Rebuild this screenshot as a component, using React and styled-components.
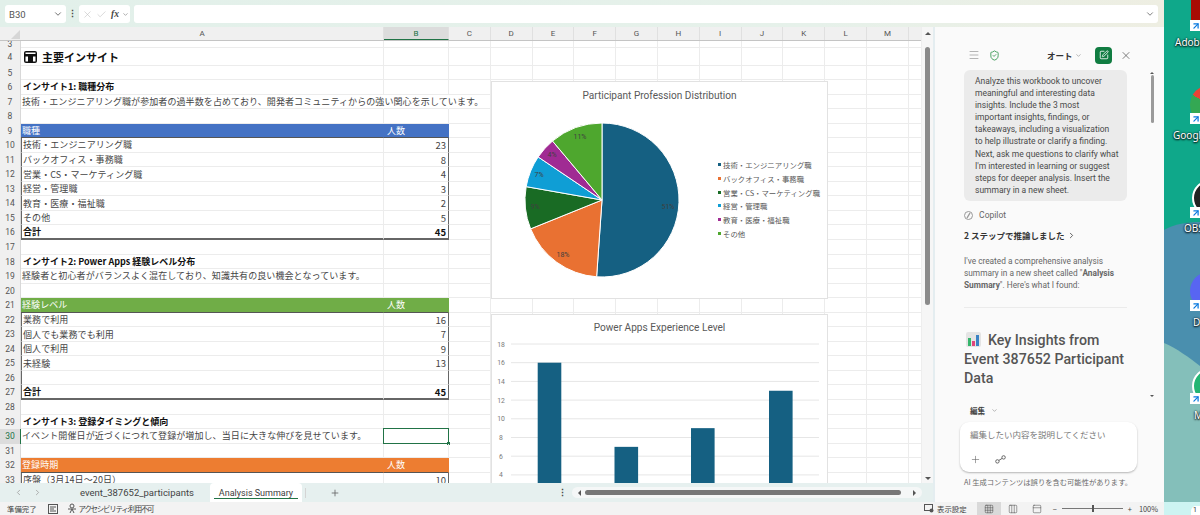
import React from 'react'
import styled, { createGlobalStyle } from 'styled-components'
import { ArrowUpRight, Check, ChevronDown, ChevronLeft, ChevronRight, Columns3, Grid3x3, Menu, PanelTop, Plus, ShieldCheck, SquarePen, X } from 'lucide-react'

const JP = `'Noto Sans CJK JP', 'Noto Sans', sans-serif`
const UI = `Roboto, 'Noto Sans CJK JP', sans-serif`

const COLUMNS = ['C', 'D', 'E', 'F', 'G', 'H', 'I', 'J', 'K', 'L', 'M', 'N']

const ROWS = [
    { n: 3, h: 7 },
    { n: 4, h: 18, kind: 'title', a: '主要インサイト' },
    { n: 5, h: 14 },
    { n: 6, kind: 'bold', a: 'インサイト1: 職種分布' },
    { n: 7, spill: true, a: '技術・エンジニアリング職が参加者の過半数を占めており、開発者コミュニティからの強い関心を示しています。' },
    { n: 8 },
    { n: 9, fill: '#4472c4', a: '職種', b: '人数' },
    { n: 10, box: true, a: '技術・エンジニアリング職', b: '23' },
    { n: 11, box: true, a: 'バックオフィス・事務職', b: '8' },
    { n: 12, box: true, a: '営業・CS・マーケティング職', b: '4' },
    { n: 13, box: true, a: '経営・管理職', b: '3' },
    { n: 14, box: true, a: '教育・医療・福祉職', b: '2' },
    { n: 15, box: true, a: 'その他', b: '5' },
    { n: 16, box: true, total: true, a: '合計', b: '45' },
    { n: 17 },
    { n: 18, kind: 'bold', a: 'インサイト2: Power Apps 経験レベル分布' },
    { n: 19, a: '経験者と初心者がバランスよく混在しており、知識共有の良い機会となっています。' },
    { n: 20 },
    { n: 21, fill: '#70ad47', a: '経験レベル', b: '人数' },
    { n: 22, box: true, a: '業務で利用', b: '16' },
    { n: 23, box: true, a: '個人でも業務でも利用', b: '7' },
    { n: 24, box: true, a: '個人で利用', b: '9' },
    { n: 25, box: true, a: '未経験', b: '13' },
    { n: 26, box: true },
    { n: 27, box: true, total: true, a: '合計', b: '45' },
    { n: 28 },
    { n: 29, kind: 'bold', a: 'インサイト3: 登録タイミングと傾向' },
    { n: 30, active: true, a: 'イベント開催日が近づくにつれて登録が増加し、当日に大きな伸びを見せています。' },
    { n: 31 },
    { n: 32, fill: '#ed7d31', a: '登録時期', b: '人数' },
    { n: 33, box: true, a: '序盤（3月14日〜20日）', b: '10' }
]

const PROFESSIONS = [
    { label: '技術・エンジニアリング職', value: 23, color: '#156082', pct: '51%', x: 176, y: 100 },
    { label: 'バックオフィス・事務職', value: 8, color: '#e97132', pct: '18%', x: 71, y: 148 },
    { label: '営業・CS・マーケティング職', value: 4, color: '#196b24', pct: '9%', x: 43, y: 100 },
    { label: '経営・管理職', value: 3, color: '#0f9ed5', pct: '7%', x: 47, y: 68 },
    { label: '教育・医療・福祉職', value: 2, color: '#a02b93', pct: '4%', x: 60, y: 48 },
    { label: 'その他', value: 5, color: '#4ea72e', pct: '11%', x: 88, y: 30 }
]

const EXPERIENCE = [
    { x: 45.7, value: 16 },
    { x: 122.5, value: 7 },
    { x: 199, value: 9 },
    { x: 277, value: 13 }
]

const GlobalStyle = createGlobalStyle`
    html, body {
        margin: 0;
        padding: 0;
        overflow: hidden;
        background: #fff;
    }
    * {
        box-sizing: border-box;
    }
`

const Page = styled.div`
    display: flex;
    width: 1200px;
    height: 515px;
    overflow: hidden;
    font-family: ${JP};
`

const ExcelWindow = styled.div`
    display: flex;
    flex-direction: column;
    width: 1164px;
    height: 515px;
    flex: none;
`

const FormulaRow = styled.div`
    display: flex;
    align-items: center;
    height: 27px;
    padding: 5px 6px 4px 5px;
    background: linear-gradient(90deg, #e2f0ea 0%, #e6f1ea 70%, #eeeee2 100%);
    flex: none;
`

const NameBox = styled.div`
    display: flex;
    align-items: center;
    justify-content: space-between;
    width: 61px;
    height: 18px;
    padding: 0 3px 0 4px;
    background: #fff;
    border-radius: 3px;
    color: #555;
    font: 9.5px ${UI};
`

const Dots = styled.div`
    width: 13px;
    color: #444;
    font: bold 9px ${UI};
    text-align: center;
`

const FxBox = styled.div`
    display: flex;
    align-items: center;
    gap: 3px;
    width: 51px;
    height: 18px;
    padding: 0 0 0 3px;
    background: #fff;
    border-radius: 3px;
    color: #bdbdbd;
`

const FxLabel = styled.span`
    margin-left: 1px;
    color: #444;
    font: italic bold 9.5px 'Liberation Serif', serif;
`

const FormulaInput = styled.div`
    display: flex;
    align-items: center;
    justify-content: flex-end;
    flex: 1;
    height: 18px;
    margin-left: 4px;
    padding-right: 3px;
    background: #fff;
    border-radius: 3px;
    color: #666;
`

const Workspace = styled.div`
    display: flex;
    flex: 1;
    min-height: 0;
`

const LeftColumn = styled.div`
    display: flex;
    flex-direction: column;
    width: 933px;
    flex: none;
`

const SheetArea = styled.div`
    display: flex;
    flex: 1;
    min-height: 0;
`

const Sheet = styled.div`
    position: relative;
    width: 921px;
    overflow: hidden;
    background: #fff;
    flex: none;
`

const HeaderRow = styled.div`
    display: flex;
    height: 14px;
    background: #f0f0f0;
    border-bottom: 1px solid #c4c4c4;
`

const Corner = styled.div`
    position: relative;
    width: 21px;
    flex: none;
    &::after {
        content: '';
        position: absolute;
        right: 1px;
        bottom: 1px;
        border-style: solid;
        border-width: 0 0 9px 9px;
        border-color: transparent transparent #d6d6d6 transparent;
    }
`

const ColumnHead = styled.div`
    width: ${p => p.$w}px;
    flex: none;
    color: ${p => (p.$on ? '#217346' : '#555')};
    background: ${p => (p.$on ? '#dcdcdc' : 'transparent')};
    border-right: 1px solid #e0e0e0;
    border-bottom: ${p => (p.$on ? '1px solid #217346' : '0')};
    font: 8px/13px ${UI};
    text-align: center;
`

const Row = styled.div`
    display: flex;
    height: ${p => p.$h}px;
`

const RowHead = styled.div`
    width: 21px;
    flex: none;
    overflow: hidden;
    background: ${p => (p.$on ? '#dcdcdc' : '#f0f0f0')};
    border-right: ${p => (p.$on ? '1px solid #217346' : '1px solid #d8d8d8')};
    color: ${p => (p.$on ? '#217346' : '#555')};
    font: 8.5px/${p => p.$h}px ${UI};
    text-align: center;
`

const cellBottom = p => {
    if (p.$total) return '2px solid #666'
    return `1px solid ${p.$fill ? '#555' : '#ececec'}`
}

const CellA = styled.div`
    display: flex;
    align-items: center;
    gap: 5px;
    width: 363px;
    flex: none;
    white-space: nowrap;
    color: ${p => (p.$fill ? '#fff' : p.$kind || p.$total ? '#111' : '#444')};
    background: ${p => p.$fill || 'transparent'};
    border-right: 1px solid ${p => (p.$spill || p.$fill ? 'transparent' : '#ececec')};
    border-bottom: ${cellBottom};
    border-left: ${p => (p.$box ? '1px solid #666' : '0')};
    font-size: ${p => (p.$kind === 'title' ? 11 : 9)}px;
    font-weight: ${p => (p.$kind || p.$total ? 700 : 400)};
    letter-spacing: ${p => (p.$kind || p.$total ? '0' : '0.09px')};
    padding-left: ${p => (p.$kind === 'title' ? '3px' : p.$kind === 'bold' ? '2px' : '1px')};
`

const CellB = styled.div`
    position: relative;
    display: flex;
    align-items: center;
    justify-content: ${p => (p.$fill ? 'flex-start' : 'flex-end')};
    width: 65px;
    flex: none;
    padding: 0 2px 0 3px;
    color: ${p => (p.$fill ? '#fff' : p.$total ? '#111' : '#444')};
    background: ${p => p.$fill || 'transparent'};
    border-right: ${p => (p.$box ? '1px solid #666' : `1px solid ${p.$spill || p.$fill ? 'transparent' : '#ececec'}`)};
    border-bottom: ${cellBottom};
    font-size: ${p => (p.$fill ? 9 : 9.5)}px;
    font-weight: ${p => (p.$total ? 700 : 400)};
`

const Selection = styled.div`
    position: absolute;
    inset: -1px -1px -1px -1px;
    border: 1.5px solid #217346;
    &::after {
        content: '';
        position: absolute;
        right: -2px;
        bottom: -2px;
        width: 3px;
        height: 3px;
        background: #217346;
    }
`

const BlankCell = styled.div`
    width: ${p => p.$w}px;
    flex: none;
    border-right: 1px solid #ececec;
    border-bottom: 1px solid #ececec;
`

const ChartCard = styled.div`
    position: absolute;
    top: ${p => p.$top}px;
    left: 491px;
    width: 337px;
    height: ${p => p.$h}px;
    background: #fff;
    border: 1px solid #e2e2e2;
`

const ChartTitle = styled.div`
    height: ${p => p.$h}px;
    color: #595959;
    font: 10.1px/${p => p.$lh}px ${UI};
    text-align: center;
`

const PieBody = styled.div`
    display: flex;
    align-items: center;
`

const Legend = styled.div`
    display: flex;
    flex-direction: column;
    gap: 2px;
    margin-left: 10px;
    margin-bottom: 10px;
`

const LegendItem = styled.div`
    display: flex;
    align-items: center;
    gap: 2px;
    height: 11.7px;
    color: #595959;
    font-size: 7.4px;
    white-space: nowrap;
`

const LegendSwatch = styled.span`
    width: 3px;
    height: 3px;
    background: ${p => p.$color};
`

const ChartSvg = styled.svg`
    display: block;
    flex: none;
    font-family: ${UI};
`

const VScroll = styled.div`
    display: flex;
    flex-direction: column;
    align-items: center;
    width: 12px;
    padding: 2px 0 0;
    background: #f6f6f6;
    border-left: 1px solid #eee;
`

const VThumb = styled.div`
    width: 5px;
    height: 258px;
    margin-top: 12px;
    margin-bottom: auto;
    background: #8a8a8a;
    border-radius: 3px;
`

const Arrow = styled.div`
    width: 0;
    height: 0;
    flex: none;
    border-left: ${p => p.$s || 3}px solid ${p => (p.$dir === 'right' ? '#555' : 'transparent')};
    border-right: ${p => p.$s || 3}px solid ${p => (p.$dir === 'left' ? '#555' : 'transparent')};
    border-top: ${p => p.$s || 3}px solid ${p => (p.$dir === 'down' ? '#555' : 'transparent')};
    border-bottom: ${p => p.$s || 3}px solid ${p => (p.$dir === 'up' ? '#555' : 'transparent')};
`

const TabBar = styled.div`
    display: flex;
    align-items: center;
    height: 19px;
    padding-left: 14px;
    background: #e6f0ef;
    color: #444;
    font: 9.5px ${UI};
    flex: none;
`

const TabNav = styled.div`
    display: flex;
    gap: 10px;
    width: 66px;
    color: #9a9a9a;
`

const Tab = styled.div`
    width: 130px;
    flex: none;
    color: #444;
    white-space: nowrap;
`

const ActiveTab = styled.div`
    position: relative;
    display: flex;
    align-items: center;
    justify-content: center;
    width: 92px;
    height: 19px;
    flex: none;
    background: #fff;
    border-radius: 4px 4px 0 0;
    color: #3c3c3c;
    font-size: 9px;
    &::after {
        content: '';
        position: absolute;
        left: 4px;
        right: 4px;
        bottom: 3px;
        height: 1.5px;
        background: #217346;
    }
`

const AddTab = styled.div`
    display: flex;
    justify-content: center;
    width: 58px;
    flex: none;
    margin-left: 3px;
    color: #666;
    border-left: 1px solid #d4d4d4;
`

const SheetDots = styled.div`
    width: 20px;
    flex: none;
    margin-left: 189px;
    color: #444;
    font: bold 9px ${UI};
    text-align: center;
`

const HScroll = styled.div`
    display: flex;
    align-items: center;
    gap: 4px;
    width: 350px;
    height: 11px;
    flex: none;
    padding: 0 3px;
    background: #f5f7f7;
    border-radius: 6px;
`

const HThumb = styled.div`
    flex: 1;
    height: 5px;
    margin-right: 8px;
    background: #777;
    border-radius: 3px;
`

const Panel = styled.div`
    display: flex;
    flex-direction: column;
    width: 231px;
    flex: none;
    padding-bottom: 14px;
    background: #fafafa;
    border-left: 2px solid #e4edf0;
    color: #444;
    font-family: ${UI};
`

const PanelHead = styled.div`
    display: flex;
    align-items: center;
    height: 43px;
    padding: 20px 32px 7px 33px;
    flex: none;
`

const ModeLabel = styled.div`
    display: flex;
    align-items: center;
    gap: 2px;
    width: 37px;
    margin-left: 47px;
    color: #333;
    font: bold 8.5px ${JP};
    white-space: nowrap;
    flex: none;
`

const NewChat = styled.div`
    display: flex;
    align-items: center;
    justify-content: center;
    width: 17px;
    height: 17px;
    margin-left: 11px;
    margin-right: 8px;
    border-radius: 4px;
    background: #107c41;
    color: #fff;
    flex: none;
`

const ShieldWrap = styled.span`
    display: flex;
    margin-left: 9px;
    color: #3d9b57;
`

const MenuWrap = styled.span`
    display: flex;
    color: #b4b4b4;
`

const ScrollBody = styled.div`
    display: flex;
    height: 329px;
    flex: none;
`

const ScrollContent = styled.div`
    width: 212px;
    height: 100%;
    padding-left: 29px;
    overflow: hidden;
    flex: none;
`

const Bubble = styled.div`
    width: 163px;
    height: 131px;
    padding: 5px 5px 0 11px;
    background: #ebebeb;
    border-radius: 6px;
    color: #4a4a4a;
    font-size: 8.5px;
    line-height: 12.1px;
    white-space: pre;
`

const CopilotLine = styled.div`
    display: flex;
    align-items: center;
    gap: 4px;
    height: 12px;
    margin-top: 8px;
    color: #666;
    font-size: 8.5px;
`

const StepsLine = styled.div`
    display: flex;
    align-items: center;
    gap: 3px;
    margin-top: 8px;
    height: 12px;
    color: #333;
    font: bold 8.5px ${JP};
`

const Reply = styled.p`
    margin: 14px 0 0;
    color: #666;
    font-size: 8.3px;
    line-height: 12.2px;
    white-space: pre;
`

const Divider = styled.hr`
    width: 163px;
    height: 1px;
    margin: 15px 0 0;
    border: 0;
    background: #ebebeb;
`

const Heading = styled.h2`
    width: 168px;
    margin: 23px 0 0;
    color: #555;
    font: 500 14.2px/19.4px ${UI};
`

const ReportSvg = styled.svg`
    margin: 0 7px 0 2px;
    vertical-align: -2px;
`

const PanelScroll = styled.div`
    display: flex;
    flex-direction: column;
    align-items: center;
    width: 8px;
    margin-left: 1px;
`

const PanelThumb = styled.div`
    width: 3px;
    height: 48px;
    margin-top: 1px;
    margin-bottom: auto;
    border-radius: 2px;
    background: #9a9a9a;
`

const EditLabel = styled.div`
    display: flex;
    align-items: center;
    gap: 6px;
    height: 12px;
    margin: 5px 0 0 35px;
    color: #444;
    font: 700 7.5px ${JP};
`

const Composer = styled.div`
    display: flex;
    flex-direction: column;
    justify-content: space-between;
    width: 177px;
    height: 50px;
    margin: 6px 0 0 25px;
    padding: 6px 0 7px 10px;
    background: #fff;
    border-radius: 9px;
    box-shadow: 0 1px 2px rgba(0, 0, 0, 0.28);
`

const Placeholder = styled.div`
    color: #777;
    font: 8.5px ${JP};
`

const ComposerTools = styled.div`
    display: flex;
    align-items: center;
    gap: 14px;
    color: #666;
`

const Disclaimer = styled.div`
    margin: 5px 0 0 29px;
    color: #6a6a6a;
    font: 7.3px ${JP};
    white-space: nowrap;
`

const StatusBar = styled.div`
    display: flex;
    align-items: center;
    height: 13px;
    padding: 0 6px 0 7px;
    background: #f3f3f3;
    color: #444;
    font: 7.4px ${JP};
    white-space: nowrap;
    flex: none;
`

const StatusGroup = styled.div`
    display: flex;
    align-items: center;
    gap: 3px;
    margin-left: ${p => p.$ml || 0}px;
    flex: none;
`

const AccessGroup = styled(StatusGroup)`
    gap: 1px;
`

const AccessLabel = styled.span`
    font-size: 7.5px;
    letter-spacing: -1.3px;
`

const DisplayGroup = styled(StatusGroup)`
    margin-left: auto;
`

const ViewButtons = styled.div`
    display: flex;
    margin-left: 10px;
    flex: none;
`

const ViewButton = styled.div`
    display: flex;
    align-items: center;
    justify-content: center;
    width: 24px;
    height: 13px;
    background: ${p => (p.$on ? '#d9d9d9' : 'transparent')};
    color: #444;
`

const ZoomSlider = styled.div`
    position: relative;
    width: 61px;
    height: 1px;
    margin: 0 2px;
    background: #777;
    &::after {
        content: '';
        position: absolute;
        left: 30px;
        top: -3px;
        width: 2px;
        height: 7px;
        background: #555;
    }
`

const Desktop = styled.div`
    position: relative;
    flex: 1;
    height: 515px;
    overflow: hidden;
    background: #cdf4f2;
`

const Wallpaper = styled.svg`
    position: absolute;
    top: 0;
    left: 0;
`

const Taskbadge = styled.div`
    position: absolute;
    top: 506px;
    left: 27px;
    width: 20px;
    height: 12px;
    padding-left: 2px;
    background: #fff;
    border-radius: 5px 0 0 0;
    color: #333;
    font: 7px/9px ${UI};
`

const Logo = styled.div`
    position: absolute;
    top: ${p => p.$top}px;
    left: ${p => p.$left}px;
    width: ${p => p.$size}px;
    height: ${p => p.$size}px;
    border-radius: ${p => (p.$square ? 0 : '50%')};
    background: ${p => p.$bg};
    border: ${p => (p.$ring ? '2px solid #fff' : '0')};
`

const ShortcutBadge = styled.div`
    position: absolute;
    top: ${p => p.$top}px;
    left: 26px;
    display: flex;
    align-items: center;
    justify-content: center;
    width: 11px;
    height: 11px;
    background: #fff;
    color: #0a7ae0;
`

const DesktopLabel = styled.div`
    position: absolute;
    top: ${p => p.$top}px;
    left: ${p => p.$left}px;
    color: #fff;
    font: 10px/12px 'Noto Sans', sans-serif;
    white-space: nowrap;
    text-shadow: 0 0 2px #000, 0 1px 2px #000;
`

const slicePath = (start, end) => {
    const r = 77
    const cx = 110
    const cy = 91
    const point = a => `${cx + r * Math.sin(a)} ${cy - r * Math.cos(a)}`
    const large = end - start > Math.PI ? 1 : 0
    return `M${cx} ${cy}L${point(start)}A${r} ${r} 0 ${large} 1 ${point(end)}Z`
}

const PieChart = () => {
    const total = PROFESSIONS.reduce((sum, p) => sum + p.value, 0)
    let angle = 0
    return (
        <ChartSvg width="216" height="190" viewBox="0 0 216 190">
            {PROFESSIONS.map(p => {
                const start = angle
                angle += (p.value / total) * Math.PI * 2
                return <path key={p.label} d={slicePath(start, angle)} fill={p.color} stroke="#fff" strokeWidth="1" />
            })}
            {PROFESSIONS.map(p => (
                <text key={p.pct} x={p.x} y={p.y} fontSize="7" fill="#404040" textAnchor="middle">{p.pct}</text>
            ))}
        </ChartSvg>
    )
}

const BarChart = () => {
    const y = v => 7 + (18 - v) * 9.35
    const ticks = [18, 16, 14, 12, 10, 8, 6, 4, 2, 0]
    return (
        <ChartSvg width="335" height="180" viewBox="0 0 335 180">
            {ticks.map(t => (
                <g key={t}>
                    <line x1="19" x2="327" y1={y(t)} y2={y(t)} stroke="#e6e6e6" strokeWidth="1" />
                    <text x="9" y={y(t) + 2.5} fontSize="6.8" fill="#7a7a7a" textAnchor="middle">{t}</text>
                </g>
            ))}
            {EXPERIENCE.map(b => (
                <rect key={b.x} x={b.x} y={y(b.value)} width="23.6" height={y(0) - y(b.value)} fill="#156082" />
            ))}
        </ChartSvg>
    )
}

const TitleIcon = () => (
    <svg width="13" height="12" viewBox="0 0 13 12">
        <rect width="13" height="12" rx="2" fill="#111" />
        <rect x="1.5" y="1.5" width="10" height="1.5" fill="#fff" />
        <rect x="1.5" y="5.5" width="2.5" height="5" fill="#fff" />
        <rect x="9" y="5.5" width="2.5" height="5" fill="#fff" />
    </svg>
)

const CopilotIcon = () => (
    <svg width="9" height="9" viewBox="0 0 9 9">
        <circle cx="4.5" cy="4.5" r="4" fill="none" stroke="#999" />
        <path d="M3 7l3-5" stroke="#999" strokeWidth="1.4" />
    </svg>
)

const LinkIcon = () => (
    <svg width="11" height="9" viewBox="0 0 11 9" fill="none" stroke="#666">
        <circle cx="2.4" cy="6.4" r="1.7" />
        <circle cx="8.6" cy="2.4" r="1.7" />
        <path d="M3.9 5.4l3.2-2" />
    </svg>
)

const ReportIcon = () => (
    <ReportSvg width="15" height="15" viewBox="0 0 15 15">
        <rect width="15" height="15" rx="2" fill="#e4e4e4" />
        <rect x="2" y="6" width="3" height="8" fill="#35b56b" />
        <rect x="6" y="9" width="3" height="5" fill="#e0457b" />
        <rect x="10" y="3" width="3" height="11" fill="#3b82c4" />
    </ReportSvg>
)

const MacroIcon = () => (
    <svg width="10" height="10" viewBox="0 0 10 10">
        <rect x="0.5" y="0.5" width="9" height="9" fill="none" stroke="#555" />
        <path d="M2 3h6M2 5h4M2 7h6" stroke="#555" />
    </svg>
)

const AccessIcon = () => (
    <svg width="11" height="11" viewBox="0 0 11 11">
        <circle cx="5" cy="3" r="2" fill="none" stroke="#555" />
        <path d="M1 6h8M3 10l2-4 2 4" fill="none" stroke="#555" />
    </svg>
)

const DisplayIcon = () => (
    <svg width="10" height="9" viewBox="0 0 10 9">
        <rect x="0.5" y="0.5" width="8" height="6" fill="none" stroke="#555" />
        <circle cx="7.5" cy="6.5" r="2" fill="#555" />
    </svg>
)

const Gridlines = () => (
    COLUMNS.map(c => <BlankCell key={c} $w={41.8} />)
)

const App = () => {
    return (
        <Page>
            <GlobalStyle />
            <ExcelWindow>
                <FormulaRow>
                    <NameBox>B30<ChevronDown size={10} color="#555" /></NameBox>
                    <Dots>⋮</Dots>
                    <FxBox>
                        <X size={11} strokeWidth={1.2} />
                        <Check size={11} strokeWidth={1.2} />
                        <FxLabel>fx</FxLabel>
                        <ChevronDown size={7} color="#777" />
                    </FxBox>
                    <FormulaInput><ChevronDown size={10} /></FormulaInput>
                </FormulaRow>
                <Workspace>
                    <LeftColumn>
                        <SheetArea>
                            <Sheet>
                                <HeaderRow>
                                    <Corner />
                                    <ColumnHead $w={363}>A</ColumnHead>
                                    <ColumnHead $w={65} $on>B</ColumnHead>
                                    {COLUMNS.map(c => <ColumnHead key={c} $w={41.8}>{c}</ColumnHead>)}
                                </HeaderRow>
                                {ROWS.map(r => {
                                    const h = r.h || 14.55
                                    return (
                                        <Row key={r.n} $h={h}>
                                            <RowHead $h={h} $on={r.active}>{r.n}</RowHead>
                                            <CellA $fill={r.fill} $spill={r.spill} $box={r.box} $total={r.total} $kind={r.kind}>
                                                {r.kind === 'title' && <TitleIcon />}
                                                {r.a}
                                            </CellA>
                                            <CellB $fill={r.fill} $spill={r.spill} $box={r.box} $total={r.total}>
                                                {r.b}
                                                {r.active && <Selection />}
                                            </CellB>
                                            <Gridlines />
                                        </Row>
                                    )
                                })}
                                <ChartCard $top={54} $h={218}>
                                    <ChartTitle $h={27} $lh={27}>Participant Profession Distribution</ChartTitle>
                                    <PieBody>
                                        <PieChart />
                                        <Legend>
                                            {PROFESSIONS.map(p => (
                                                <LegendItem key={p.label}>
                                                    <LegendSwatch $color={p.color} />{p.label}
                                                </LegendItem>
                                            ))}
                                        </Legend>
                                    </PieBody>
                                </ChartCard>
                                <ChartCard $top={287} $h={200}>
                                    <ChartTitle $h={22} $lh={26}>Power Apps Experience Level</ChartTitle>
                                    <BarChart />
                                </ChartCard>
                            </Sheet>
                            <VScroll>
                                <Arrow $dir="up" />
                                <VThumb />
                                <Arrow $dir="down" />
                            </VScroll>
                        </SheetArea>
                        <TabBar>
                            <TabNav>
                                <ChevronLeft size={9} />
                                <ChevronRight size={9} />
                            </TabNav>
                            <Tab>event_387652_participants</Tab>
                            <ActiveTab>Analysis Summary</ActiveTab>
                            <AddTab><Plus size={10} /></AddTab>
                            <SheetDots>⋮</SheetDots>
                            <HScroll>
                                <Arrow $dir="left" />
                                <HThumb />
                                <Arrow $dir="right" />
                            </HScroll>
                        </TabBar>
                    </LeftColumn>
                    <Panel>
                        <PanelHead>
                            <MenuWrap><Menu size={12} /></MenuWrap>
                            <ShieldWrap><ShieldCheck size={11} /></ShieldWrap>
                            <ModeLabel>オート<ChevronDown size={7} color="#888" /></ModeLabel>
                            <NewChat><SquarePen size={10} /></NewChat>
                            <X size={13} color="#555" strokeWidth={1.5} />
                        </PanelHead>
                        <ScrollBody>
                            <ScrollContent>
                                <Bubble>{`Analyze this workbook to uncover
meaningful and interesting data
insights. Include the 3 most
important insights, findings, or
takeaways, including a visualization
to help illustrate or clarify a finding.
Next, ask me questions to clarify what
I'm interested in learning or suggest
steps for deeper analysis. Insert the
summary in a new sheet.`}</Bubble>
                                <CopilotLine><CopilotIcon />&nbsp;Copilot</CopilotLine>
                                <StepsLine>2 ステップで推論しました<ChevronRight size={9} /></StepsLine>
                                <Reply>
                                    {'I\'ve created a comprehensive analysis\nsummary in a new sheet called "'}<b>Analysis{'\n'}Summary</b>{'". Here\'s what I found:'}
                                </Reply>
                                <Divider />
                                <Heading><ReportIcon />Key Insights from Event 387652 Participant Data</Heading>
                            </ScrollContent>
                            <PanelScroll>
                                <Arrow $dir="up" $s={2} />
                                <PanelThumb />
                                <Arrow $dir="down" $s={2} />
                            </PanelScroll>
                        </ScrollBody>
                        <EditLabel>編集<ChevronDown size={7} color="#888" /></EditLabel>
                        <Composer>
                            <Placeholder>編集したい内容を説明してください</Placeholder>
                            <ComposerTools>
                                <Plus size={11} strokeWidth={1.3} />
                                <LinkIcon />
                            </ComposerTools>
                        </Composer>
                        <Disclaimer>AI 生成コンテンツは誤りを含む可能性があります。</Disclaimer>
                    </Panel>
                </Workspace>
                <StatusBar>
                    <span>準備完了</span>
                    <StatusGroup $ml={11}><MacroIcon /></StatusGroup>
                    <AccessGroup $ml={9}><AccessIcon /><AccessLabel>アクセシビリティ: 利用不可</AccessLabel></AccessGroup>
                    <DisplayGroup><DisplayIcon />表示設定</DisplayGroup>
                    <ViewButtons>
                        <ViewButton $on><Grid3x3 size={10} strokeWidth={1.2} /></ViewButton>
                        <ViewButton><Columns3 size={10} strokeWidth={1.2} /></ViewButton>
                        <ViewButton><PanelTop size={10} strokeWidth={1.2} /></ViewButton>
                    </ViewButtons>
                    <StatusGroup $ml={4}>−<ZoomSlider />+</StatusGroup>
                    <StatusGroup $ml={7}>100%</StatusGroup>
                </StatusBar>
            </ExcelWindow>
            <Desktop>
                <Wallpaper width="36" height="502" viewBox="0 0 36 502">
                    <rect width="36" height="502" fill="#0fa88a" />
                    <path d="M0 230C10 224 24 222 36 222V502H0Z" fill="#4a8fae" />
                    <path d="M0 343C12 348 26 358 36 366V502H0Z" fill="#84bfba" />
                </Wallpaper>
                <Logo $top={-4} $left={27} $size={24} $square $bg="#a80c04" />
                <ShortcutBadge $top={20}><ArrowUpRight size={10} strokeWidth={3} /></ShortcutBadge>
                <DesktopLabel $top={36} $left={11}>Adobe</DesktopLabel>
                <Logo $top={85} $left={26} $size={40} $bg="conic-gradient(from 300deg, #ea4335 0 120deg, #fbbc05 120deg 240deg, #34a853 240deg 360deg)" />
                <ShortcutBadge $top={113}><ArrowUpRight size={10} strokeWidth={3} /></ShortcutBadge>
                <DesktopLabel $top={129} $left={9}>Google</DesktopLabel>
                <Logo $top={180} $left={28} $size={36} $ring $bg="#222" />
                <ShortcutBadge $top={207}><ArrowUpRight size={10} strokeWidth={3} /></ShortcutBadge>
                <DesktopLabel $top={222} $left={20}>OBS</DesktopLabel>
                <Logo $top={272} $left={26} $size={38} $bg="#5865f2" />
                <ShortcutBadge $top={300}><ArrowUpRight size={10} strokeWidth={3} /></ShortcutBadge>
                <DesktopLabel $top={316} $left={29}>D</DesktopLabel>
                <Logo $top={368} $left={28} $size={36} $ring $bg="#22b573" />
                <ShortcutBadge $top={393}><ArrowUpRight size={10} strokeWidth={3} /></ShortcutBadge>
                <DesktopLabel $top={409} $left={30}>M</DesktopLabel>
                <Taskbadge>1</Taskbadge>
            </Desktop>
        </Page>
    )
}

export default App
